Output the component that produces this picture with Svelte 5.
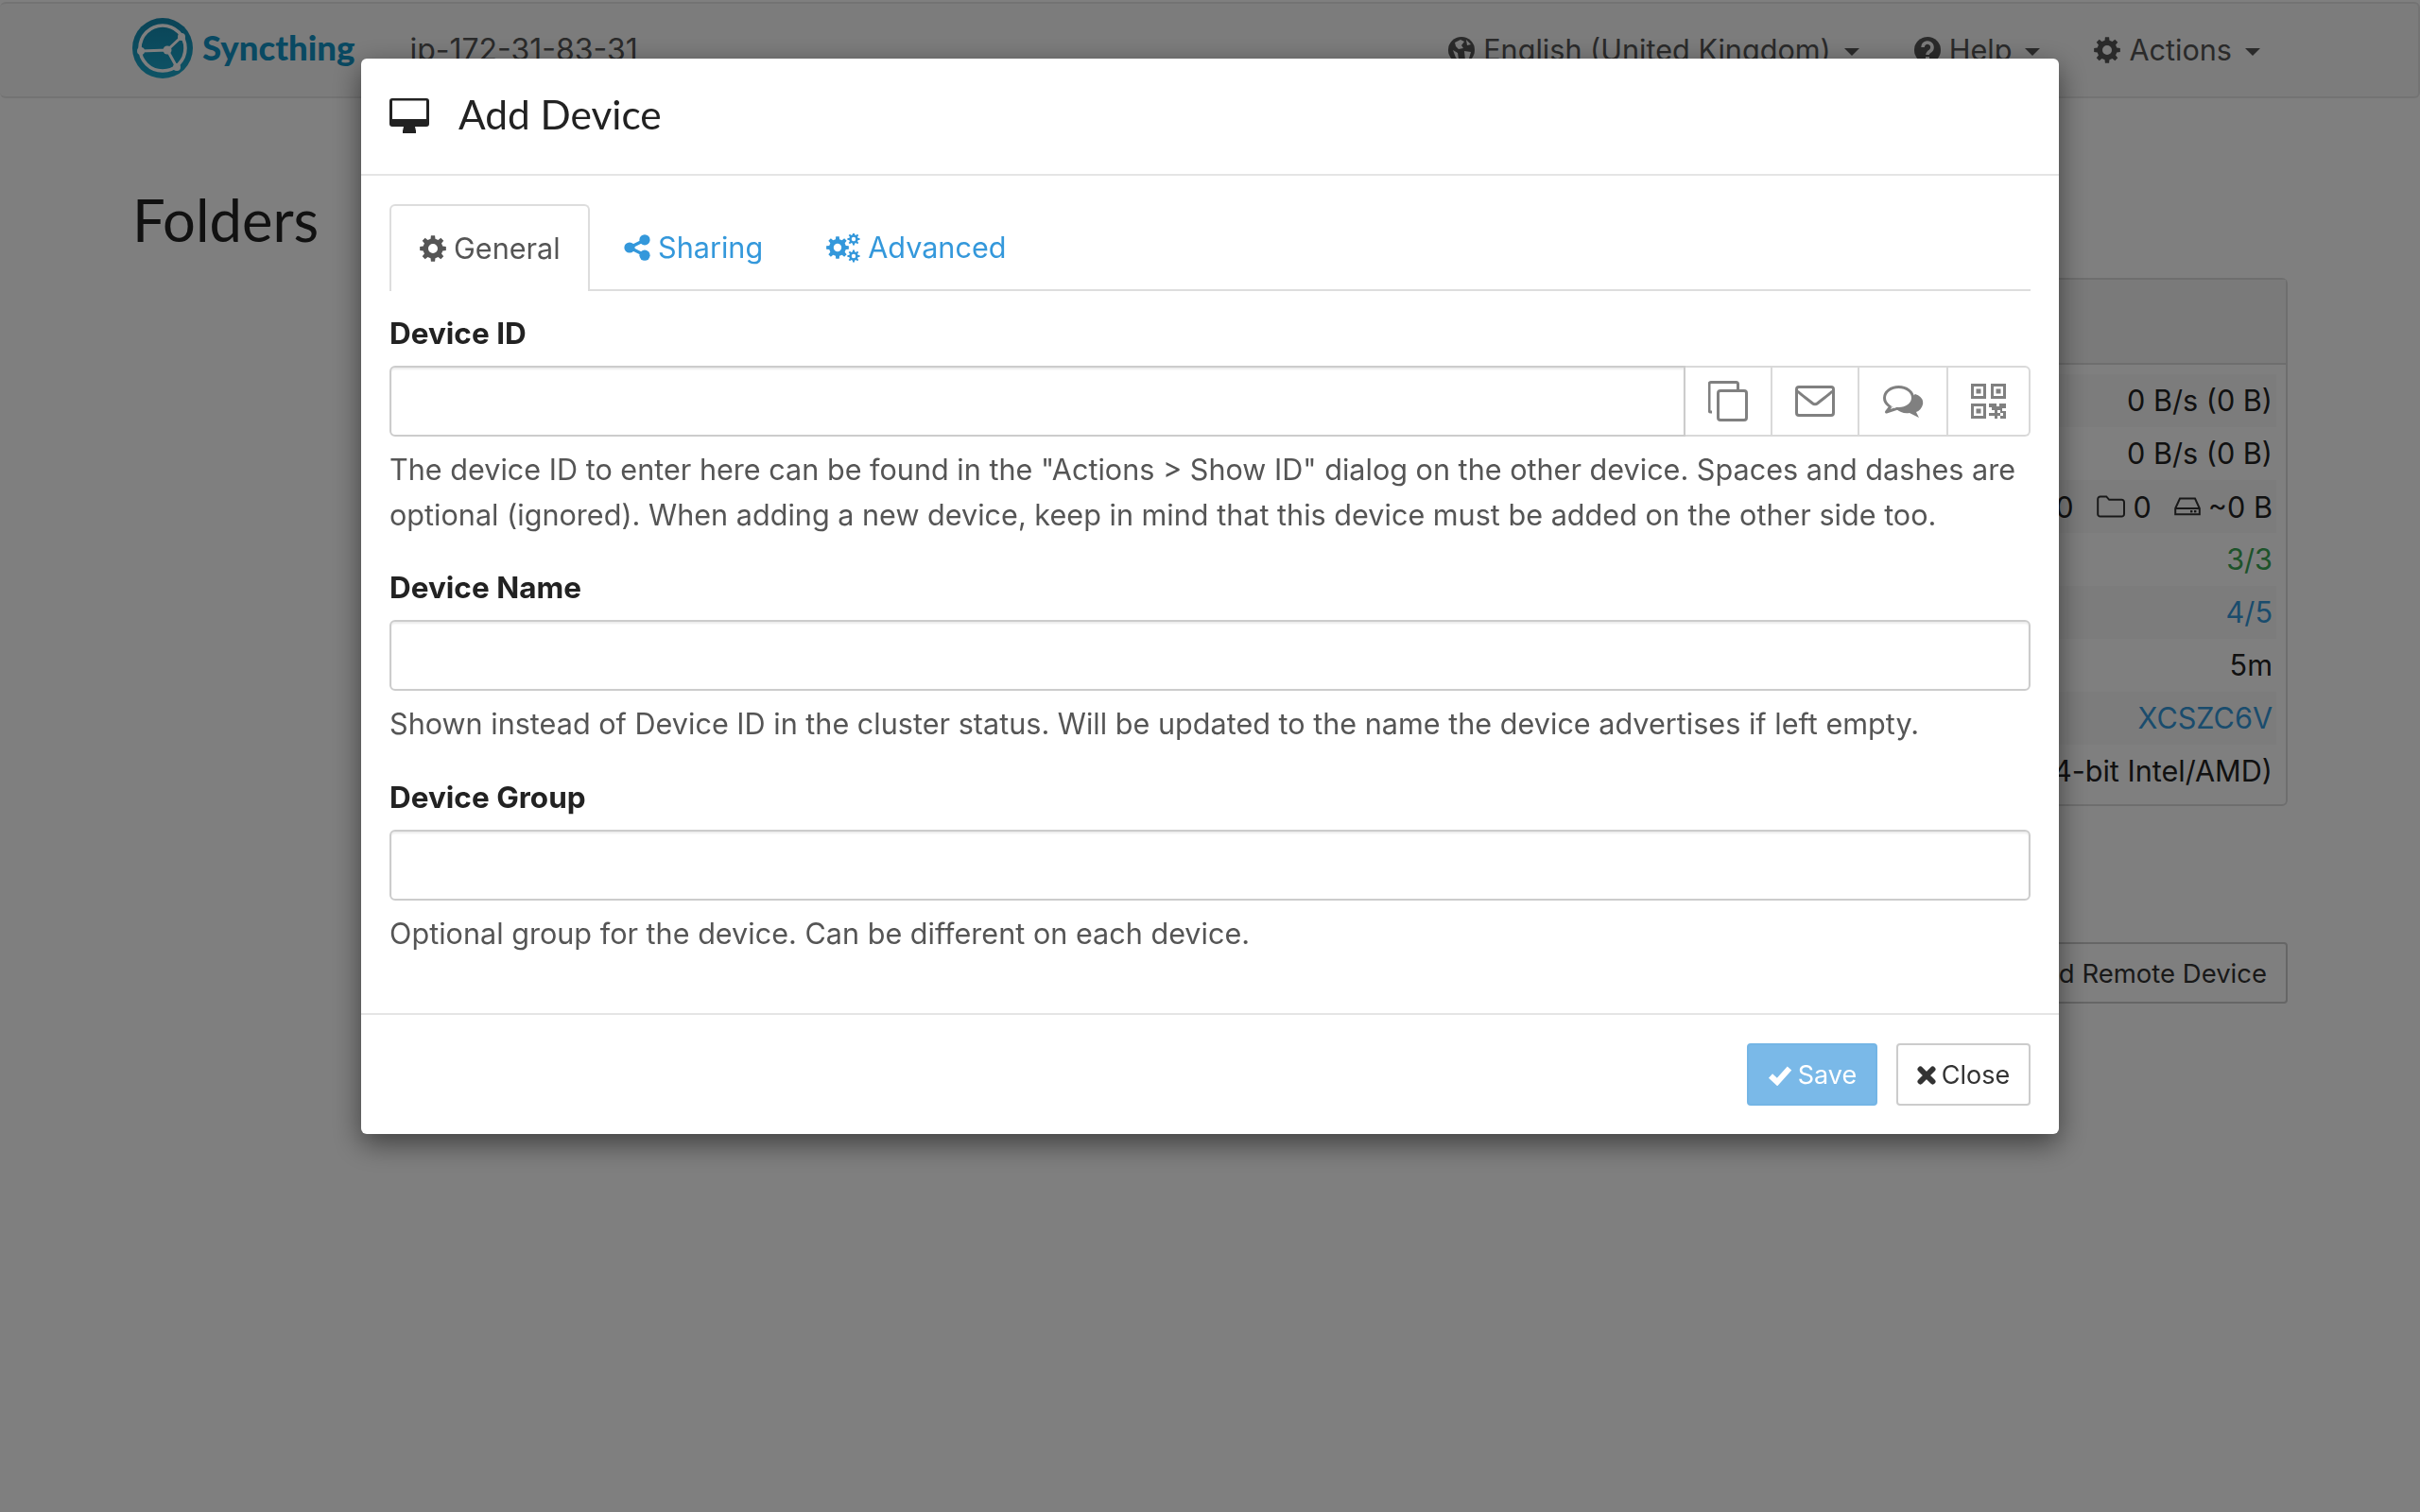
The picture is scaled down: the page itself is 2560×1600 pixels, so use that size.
<script>
  function gear(cx, cy, R, r, hole, n = 8) {
    let d = '';
    const step = (Math.PI * 2) / n;
    for (let i = 0; i < n; i++) {
      const a = i * step - Math.PI / 2;
      const pts = [
        [r, a - step * 0.3],
        [R, a - step * 0.19],
        [R, a + step * 0.19],
        [r, a + step * 0.3]
      ];
      for (const [rad, t] of pts) {
        d += (d ? 'L' : 'M') + (cx + rad * Math.cos(t)).toFixed(2) + ' ' + (cy + rad * Math.sin(t)).toFixed(2);
      }
    }
    d += 'Z';
    d += `M${cx - hole} ${cy}a${hole} ${hole} 0 1 0 ${hole * 2} 0a${hole} ${hole} 0 1 0 ${-hole * 2} 0Z`;
    return d;
  }
  const cog = gear(14, 14, 14, 10.6, 5);
  const cogsPath = gear(12, 15, 12, 9, 4.2) + gear(29, 6, 6.6, 4.8, 2.2) + gear(29, 24, 6.6, 4.8, 2.2);

  const stats = [
    { value: '0 B/s (0 B)' },
    { value: '0 B/s (0 B)' },
    { local: true },
    { value: '3/3', tone: 'ok' },
    { value: '4/5', tone: 'link' },
    { value: '5m' },
    { value: 'XCSZC6V', tone: 'link' },
    { value: 'Linux (64-bit Intel/AMD)' }
  ];
  const fields = [
    { label: 'Device Name', help: 'Shown instead of Device ID in the cluster status. Will be updated to the name the device advertises if left empty.' },
    { label: 'Device Group', help: 'Optional group for the device. Can be different on each device.' }
  ];
</script>

<div class="page">
  <nav class="navbar">
    <div class="brand">
      <svg class="logo" viewBox="0 0 64 64" aria-hidden="true">
        <defs>
          <linearGradient id="lg" x1="0" y1="0" x2="0" y2="1">
            <stop offset="0" stop-color="#1488ae" />
            <stop offset="1" stop-color="#1ca8cc" />
          </linearGradient>
        </defs>
        <circle cx="32" cy="32" r="32" fill="url(#lg)" />
        <circle cx="32" cy="32" r="24" fill="none" stroke="#fff" stroke-width="3.6" />
        <g stroke="#fff" stroke-width="3" fill="none">
          <path d="M9 35 L37 34 M37 34 L52 20 M37 34 L47 52" />
        </g>
        <g fill="#fff">
          <circle cx="37" cy="34" r="4.500" />
          <circle cx="9" cy="35" r="4" />
          <circle cx="52" cy="20" r="4" />
          <circle cx="47" cy="52" r="4" />
        </g>
      </svg>
      <span class="brand-name">Syncthing</span>
    </div>
    <span class="host">ip-172-31-83-31</span>
    <div class="nav-right">
      <span class="nav-item lang">
        <svg class="nav-ico" viewBox="0 0 28 28" aria-hidden="true">
          <circle cx="14" cy="14" r="14" fill="#555" />
          <path d="M7 6 l6 -3 l4 2 l-3 4 l2 3 l-5 1 l-3 -3z M19 3 l5 5 l-4 1z M17 15 l7 1 l-2 7 l-4 2z M5 14 l5 3 l1 7 l-3 -2z" fill="#f8f8f8" />
        </svg>
        English (United Kingdom)<i class="caret"></i>
      </span>
      <span class="nav-item help">
        <svg class="nav-ico" viewBox="0 0 28 28" aria-hidden="true">
          <circle cx="14" cy="14" r="14" fill="#555" />
          <path d="M9 11 a5 5 0 1 1 8 4 q-3 2 -3 4" fill="none" stroke="#f8f8f8" stroke-width="3.600" />
          <rect x="12" y="21" width="4" height="4" fill="#f8f8f8" />
        </svg>
        Help<i class="caret"></i>
      </span>
      <span class="nav-item actions">
        <svg class="nav-ico" viewBox="0 0 28 28" aria-hidden="true"><path d={cog} fill="#555" fill-rule="evenodd" /></svg>
        Actions<i class="caret"></i>
      </span>
    </div>
  </nav>

  <main class="columns">
    <section>
      <h3>Folders</h3>
    </section>
    <section class="right">
      <h3>This Device</h3>
      <div class="panel">
        <div class="panel-head"></div>
        <div class="panel-body">
          {#each stats as s, i}
            <div class="row" class:striped={i % 2 === 0}>
              {#if s.local}
                <span class="local">
                  <span>0</span>
                  <svg class="folder" viewBox="0 0 30 24" aria-hidden="true"><path d="M1.200 20.500V4a2.600 2.600 0 0 1 2.600-2.600h6.400l3 3.400h13.200a2.600 2.600 0 0 1 2.600 2.600v12.600a2.600 2.600 0 0 1-2.600 2.600H3.800a2.600 2.600 0 0 1-2.600-2.600Z" fill="none" stroke="#333" stroke-width="2" /></svg>
                  <span>0</span>
                  <svg class="hdd" viewBox="0 0 28 22" aria-hidden="true"><path d="M1.200 13 6 2.600h16L26.800 13v6.200H1.200Z M1.200 13h25.600" fill="none" stroke="#333" stroke-width="2" /><rect x="17" y="15" width="2.400" height="2.400" fill="#333" /><rect x="21" y="15" width="2.400" height="2.400" fill="#333" /></svg>
                  <span>~0 B</span>
                </span>
              {:else}
                <span class={s.tone}>{s.value}</span>
              {/if}
            </div>
          {/each}
        </div>
      </div>
      <div class="panel-actions"><span class="btn-remote">Add Remote Device</span></div>
    </section>
  </main>
</div>

<div class="backdrop"></div>

<div class="modal">
  <header class="modal-head">
    <svg class="desk" viewBox="0 0 42 37" aria-hidden="true">
      <path fill-rule="evenodd" d="M3 0h36a3 3 0 0 1 3 3v24a3 3 0 0 1-3 3H27l1 4.500V37H14v-2.500l1-4.500H3a3 3 0 0 1-3-3V3a3 3 0 0 1 3-3ZM3 2.600V22h36V2.600Z" fill="#222" />
    </svg>
    <h4>Add Device</h4>
  </header>
  <div class="modal-body">
    <ul class="tabs">
      <li class="tab active">
        <svg class="tab-ico" viewBox="0 0 28 28" aria-hidden="true"><path d={cog} fill-rule="evenodd" /></svg>
        General
      </li>
      <li class="tab">
        <svg class="tab-ico share" viewBox="0 0 28 28" aria-hidden="true">
          <path d="M6 14 L22 6 M6 14 L22 22" stroke="currentColor" stroke-width="3.400" />
          <circle cx="6" cy="14" r="5.600" /><circle cx="22" cy="5.800" r="5.600" /><circle cx="22" cy="22.200" r="5.600" />
        </svg>
        Sharing
      </li>
      <li class="tab">
        <svg class="tab-ico cogs" viewBox="0 0 36 31" aria-hidden="true"><path d={cogsPath} fill-rule="evenodd" /></svg>
        Advanced
      </li>
    </ul>

    <div class="group first">
      <label for="device-id">Device ID</label>
      <div class="input-group">
        <input id="device-id" class="control" />
        <span class="addon">
          <svg width="42" height="43" viewBox="0 0 42 43" aria-hidden="true">
            <path d="M4 33H3a2 2 0 0 1-2-2V3.500a2 2 0 0 1 2-2h26.500a2 2 0 0 1 2 2V9" fill="none" stroke="#808080" stroke-width="3" />
            <rect x="10.500" y="10.500" width="30" height="31" rx="2.500" fill="none" stroke="#808080" stroke-width="3" />
          </svg>
        </span>
        <span class="addon">
          <svg width="42" height="33" viewBox="0 0 42 33" aria-hidden="true">
            <rect x="1.500" y="1.500" width="39" height="30" rx="2.500" fill="none" stroke="#808080" stroke-width="3" />
            <path d="M2.500 6 C8 11 14 15 18 18.500 Q21 21 24 18.500 C28 15 34 11 39.500 6" fill="none" stroke="#808080" stroke-width="3" />
          </svg>
        </span>
        <span class="addon wide">
          <svg width="43" height="34" viewBox="0 0 43 34" aria-hidden="true">
            <path d="M34 9 C40 11 43 15 42 20 C41 24 38 27 35 28 L38 34 L28 29 C22 30 18 28 14 25 Z" fill="#808080" />
            <ellipse cx="16.500" cy="13" rx="15" ry="11.500" fill="#fff" stroke="#808080" stroke-width="3" />
            <path d="M8 22 L3.500 28 L14 24.500" fill="#fff" stroke="#808080" stroke-width="3" stroke-linejoin="round" />
            <path d="M6.500 20 L12 24 L16 22 Z" fill="#fff" />
          </svg>
        </span>
        <span class="addon">
          <svg width="37" height="37" viewBox="0 0 37 37" fill="#808080" aria-hidden="true">
            <path fill-rule="evenodd" d="M0 0h16v16H0ZM3 3v10h10V3ZM21 0h16v16H21ZM24 3v10h10V3ZM0 21h16v16H0ZM3 24v10h10V24Z" />
            <rect x="5.500" y="5.500" width="5" height="5" /><rect x="26.500" y="5.500" width="5" height="5" /><rect x="5.500" y="26.500" width="5" height="5" />
            <path d="M19 21h8v3h3v-3h7v5h-4v3h4v8h-6v-3h3v-3h-3v-3h-3v3h3v3h-3v3h-3v-3h-6v-3h6v-3h-3v-3h-3Z" />
          </svg>
        </span>
      </div>
      <p class="help-text">The device ID to enter here can be found in the "Actions &gt; Show ID" dialog on the other device. Spaces and dashes are optional (ignored). When adding a new device, keep in mind that this device must be added on the other side too.</p>
    </div>

    {#each fields as f}
      <div class="group">
        <label for={f.label}>{f.label}</label>
        <input id={f.label} class="control full" />
        <p class="help-text">{f.help}</p>
      </div>
    {/each}
  </div>
  <footer class="modal-foot">
    <button class="btn primary" type="button">
      <svg width="26" height="22" viewBox="0 0 26 22" aria-hidden="true"><path d="M3 11.500 L10 18 L23 3.500" fill="none" stroke="#fff" stroke-width="6" /></svg>
      Save
    </button>
    <button class="btn" type="button">
      <svg width="20" height="20" viewBox="0 0 20 20" aria-hidden="true"><path d="M3.500 3.500 L16.500 16.500 M16.500 3.500 L3.500 16.500" fill="none" stroke="#333" stroke-width="6" stroke-linecap="round" /></svg>
      Close
    </button>
  </footer>
</div>

<style>
  :global(body) {
    margin: 0;
    background: #fff;
    font-family: Inter, "Liberation Sans", sans-serif;
    color: #555;
    font-size: 30.6px;
    line-height: 48px;
  }
  .page { height: 1600px; overflow: hidden; }
  .navbar {
    display: flex;
    align-items: center;
    padding: 0 0 0 140px;
    margin-top: 2px;
    background: #f8f8f8;
    border: 2px solid #e7e7e7;
    border-left-width: 0;
    border-radius: 6px;
    box-sizing: content-box;
    height: 98px;
    color: #555;
  }
  .brand { display: flex; align-items: center; gap: 10px; }
  .logo { width: 64px; height: 64px; display: block; margin-top: -4px; }
  .brand-name {
    font-family: Lato, sans-serif;
    font-weight: 900;
    font-size: 36.6px;
    color: #1293c4;
    margin-top: -6px;
  }
  .host { margin-left: 58px; color: #555; font-size: 32px; }
  .nav-right { margin-left: auto; display: flex; align-items: center; padding-right: 167px; }
  .nav-item { display: inline-flex; align-items: center; }
  .nav-item.help { margin-left: 58px; }
  .nav-item.actions { margin-left: 57px; }
  .nav-ico { width: 28px; height: 28px; margin-right: 9px; }
  .caret {
    display: inline-block;
    margin-left: 14px;
    margin-top: 4px;
    border-top: 8px solid #555;
    border-left: 8px solid transparent;
    border-right: 8px solid transparent;
  }
  .columns {
    display: grid;
    grid-template-columns: 1fr 1fr;
    gap: 60px;
    padding: 0 140px;
  }
  h3 {
    margin: 95px 0 0;
    font-family: Lato, sans-serif;
    font-weight: 400;
    font-size: 61.5px;
    line-height: 66px;
    color: #222;
  }
  .panel {
    margin-top: 29px;
    border: 2px solid #ddd;
    border-radius: 6px;
    background: #fff;
  }
  .panel-head { height: 88px; background: #f5f5f5; border-bottom: 2px solid #ddd; }
  .panel-body { padding: 10px 10px 7px 20px; color: #333; }
  .row {
    display: flex;
    justify-content: flex-end;
    height: 56px;
    padding-right: 4px;
    line-height: 55px;
    color: #222;
    white-space: nowrap;
  }
  .row.striped { background: #f9f9f9; }
  .ok { color: #3aa655; }
  .link { color: #3498db; }
  .local { display: inline-flex; align-items: center; }
  .folder { width: 30px; height: 24px; margin: 0 9px 0 24px; }
  .hdd { width: 28px; height: 22px; margin: 0 8px 0 24px; }
  .panel-actions { display: flex; justify-content: flex-end; margin-top: 144px; }
  .btn-remote {
    display: inline-block;
    padding: 0 20px;
    height: 61px;
    line-height: 62px;
    font-size: 27.5px;
    color: #333;
    background: #fff;
    border: 2px solid #ccc;
    border-radius: 4px;
  }
  .backdrop { position: fixed; inset: 0; background: rgba(0, 0, 0, 0.5); }
  .modal {
    position: fixed;
    top: 62px;
    left: 0;
    right: 0;
    margin: 0 auto;
    width: 1796px;
    background: #fff;
    border-radius: 6px;
    box-shadow: 0 10px 30px rgba(0, 0, 0, 0.5);
  }
  .modal-head {
    display: flex;
    align-items: center;
    height: 122px;
    padding: 0 30px;
    border-bottom: 2px solid #e5e5e5;
    box-sizing: content-box;
  }
  .desk { width: 42px; height: 37px; margin-right: 31px; margin-top: -2px; }
  h4 {
    margin: -5px 0 0;
    font-family: Lato, sans-serif;
    font-weight: 400;
    font-size: 42.4px;
    line-height: 44px;
    color: #222;
  }
  .modal-body { padding: 30px 30px 60px; }
  .tabs {
    display: flex;
    list-style: none;
    margin: 0;
    padding: 0;
    border-bottom: 2px solid #ddd;
  }
  .tab {
    display: flex;
    align-items: center;
    height: 92px;
    margin-bottom: -2px;
    padding: 0 30px;
    margin-right: 7px;
    color: #3498db;
    box-sizing: border-box;
  }
  .tab.active {
    color: #555;
    background: #fff;
    border: 2px solid #ddd;
    border-bottom: 0;
    border-radius: 6px 6px 0 0;
    margin-right: 2px;
    width: 212px;
    padding: 0 0 0 30px;
  }
  .tab svg { fill: currentColor; }
  .tab-ico { width: 28px; height: 28px; margin-right: 8px; }
  .tab-ico.share { margin-right: 8px; margin-left: 4px; }
  .tab-ico.cogs { width: 36px; height: 31px; margin-right: 8px; }
  .group { margin-top: 33px; }
  .group:last-child { margin-top: 34px; }
  .group.first { margin-top: 25px; }
  label {
    display: block;
    height: 40px;
    line-height: 40px;
    margin-bottom: 14px;
    font-size: 31.5px;
    font-weight: 700;
    color: #222;
  }
  .input-group { display: flex; height: 75px; }
  .control {
    flex: 1;
    height: 75px;
    box-sizing: border-box;
    border: 2px solid #ccc;
    border-radius: 6px 0 0 6px;
    background: #fff;
    box-shadow: inset 0 2px 2px rgba(0, 0, 0, 0.075);
    margin: 0;
    padding: 0;
    outline: none;
  }
  .control.full { width: 100%; display: block; border-radius: 6px; }
  .addon {
    display: flex;
    align-items: center;
    justify-content: center;
    width: 92px;
    box-sizing: border-box;
    border: 2px solid #d9d9d9;
    border-left: 0;
  }
  .addon.wide { width: 94px; }
  .addon:last-child { border-radius: 0 6px 6px 0; width: 87px; }
  .help-text { margin: 11px 0 0; color: #555; }
  .modal-foot {
    display: flex;
    justify-content: flex-end;
    gap: 20px;
    padding: 30px;
    border-top: 2px solid #e5e5e5;
  }
  .btn {
    display: inline-flex;
    align-items: center;
    justify-content: center;
    gap: 6px;
    height: 66px;
    width: 142px;
    padding: 2px 0 0;
    box-sizing: border-box;
    border: 2px solid #ccc;
    border-radius: 4px;
    background: #fff;
    color: #333;
    font: inherit;
    font-size: 27px;
  }
  .btn.primary {
    width: 138px;
    background: #7ab9e8;
    border-color: #74b5e5;
    color: #fff;
  }
</style>
